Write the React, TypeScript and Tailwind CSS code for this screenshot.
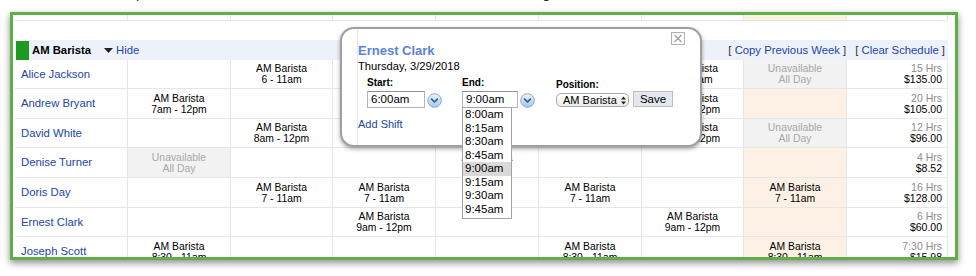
import React from 'react';

type Day = null | 'un' | string;

const DAY_W = ['w-[103px]', 'w-[102px]', 'w-[103px]', 'w-[103px]', 'w-[103px]', 'w-[102px]', 'w-[103px]'];

const rows: { name: string; h: string; days: Day[]; hrs: string; pay: string }[] = [
  { name: 'Alice Jackson', h: 'h-[29px]', days: [null, '6 - 11am', null, null, null, '6 - 11am', 'un'], hrs: '15 Hrs', pay: '$135.00' },
  { name: 'Andrew Bryant', h: 'h-[30px]', days: ['7am - 12pm', null, null, null, null, '7am - 12pm', null], hrs: '20 Hrs', pay: '$105.00' },
  { name: 'David White', h: 'h-[29px]', days: [null, '8am - 12pm', null, null, null, '8am - 12pm', 'un'], hrs: '12 Hrs', pay: '$96.00' },
  { name: 'Denise Turner', h: 'h-[30px]', days: ['un', null, null, '8 - 12pm', null, null, null], hrs: '4 Hrs', pay: '$8.52' },
  { name: 'Doris Day', h: 'h-[30px]', days: [null, '7 - 11am', '7 - 11am', null, '7 - 11am', null, '7 - 11am'], hrs: '16 Hrs', pay: '$128.00' },
  { name: 'Ernest Clark', h: 'h-[29px]', days: [null, null, '9am - 12pm', null, null, '9am - 12pm', null], hrs: '6 Hrs', pay: '$60.00' },
  { name: 'Joseph Scott', h: 'h-[30px]', days: ['8:30 - 11am', null, null, null, '8:30 - 11am', null, '8:30 - 11am'], hrs: '7:30 Hrs', pay: '$15.98' },
];

const times = ['8:00am', '8:15am', '8:30am', '8:45am', '9:00am', '9:15am', '9:30am', '9:45am'];

function DayCell({ d, i, w }: { d: Day; i: number; w: string }) {
  const bg = d === 'un' ? 'bg-[#f2f2f2]' : i === 6 ? 'bg-[#fdf1e5]' : '';
  return (
    <div className={`${w} ${bg} shrink-0 border-r border-[#e6e6e6] flex flex-col items-center justify-center text-[10.4px] leading-[11px]`}>
      {d === 'un' ? (
        <>
          <span className="text-[#a8a8a8]">Unavailable</span>
          <span className="text-[#a8a8a8]">All Day</span>
        </>
      ) : d ? (
        <>
          <span className="text-black">AM Barista</span>
          <span className="text-black">{d}</span>
        </>
      ) : null}
    </div>
  );
}

function Spin({ id }: { id: string }) {
  return (
    <svg width="15" height="15" viewBox="0 0 15 15" className="shrink-0">
      <defs>
        <linearGradient id={id} x1="0" y1="0" x2="0" y2="1">
          <stop offset="0" stopColor="#eef5fc" />
          <stop offset="1" stopColor="#a6c6e8" />
        </linearGradient>
      </defs>
      <circle cx="7.5" cy="7.5" r="6.8" fill={`url(#${id})`} stroke="#86a9cf" strokeWidth="1" />
      <path d="M4.6 6.1 L7.5 9 L10.4 6.1" fill="none" stroke="#2c5d97" strokeWidth="1.7" strokeLinecap="round" strokeLinejoin="round" />
    </svg>
  );
}

export default function App() {
  return (
    <div className="relative w-[976px] h-[276px] overflow-hidden bg-white font-['Liberation_Sans',Arial,sans-serif]">
      {/* caption line above, only its descenders show */}
      <div className="h-[12px] overflow-hidden">
        <p className="-mt-[16px] text-[15px] leading-[17px] text-[#222] whitespace-nowrap">
          <span className="ml-[124px]">Tip</span>
          <span className="ml-[368px]">Using</span>
        </p>
      </div>

      <div className="ml-[10px] w-[948px] h-[248px] overflow-hidden border-[3px] border-[#5fae48] bg-white pl-[2px] pr-[7px] shadow-[0_3px_7px_rgba(0,0,0,0.45)]">
        {/* tail of previous row */}
        <div className="flex h-[6px] border-b border-[#e6e6e6]">
          <div className="w-[113px] shrink-0 border-r border-[#e6e6e6]" />
          {DAY_W.map((w, i) => (
            <div key={i} className={`${w} shrink-0 border-r border-[#e6e6e6] overflow-hidden text-center ${i === 6 ? 'bg-[#fdf1e5]' : ''}`}>
              <div className="-mt-[9px] text-[10.4px] leading-[11px] text-black">7 - 11am</div>
            </div>
          ))}
          <div className="w-[101px] shrink-0 border-r border-[#e6e6e6]" />
        </div>

        {/* section header */}
        <div className="mt-[19px] flex items-center h-[20px] bg-[#edf2fa] text-[11.3px] pr-[3px]">
          <div className="ml-[1px] w-[13px] h-[19px] bg-[#1e9a22]" />
          <span className="ml-[3px] font-bold text-black">AM Barista</span>
          <svg width="9" height="5" viewBox="0 0 9 5" className="ml-[13px]">
            <path d="M0 0 H9 L4.5 5 Z" fill="#222" />
          </svg>
          <span className="ml-[3px] text-[#2345a7]">Hide</span>
          <div className="ml-auto flex gap-[9px]">
            <span className="text-[#333]">[ <span className="text-[#2345a7]">Copy Previous Week</span> ]</span>
            <span className="text-[#333]">[ <span className="text-[#2345a7]">Clear Schedule</span> ]</span>
          </div>
        </div>

        {rows.map((r) => (
          <div key={r.name} className={`flex ${r.h} shrink-0 border-b border-[#e6e6e6]`}>
            <div className="w-[113px] shrink-0 border-r border-[#e6e6e6] flex items-center pl-[6px] text-[11.3px] text-[#2345a7]">
              {r.name}
            </div>
            {r.days.map((d, i) => (
              <DayCell key={i} d={d} i={i} w={DAY_W[i]} />
            ))}
            <div className="w-[101px] shrink-0 border-r border-[#e6e6e6] flex flex-col items-end justify-center pr-[5px] text-[10.5px] leading-[11px]">
              <span className="text-[#8c8c8c]">{r.hrs}</span>
              <span className="text-black">{r.pay}</span>
            </div>
          </div>
        ))}
      </div>

      {/* shift editor popup */}
      <div className="absolute left-[340px] top-[27px] w-[362px] h-[120px] rounded-[14px] border-2 border-[#a0a0a0] bg-white shadow-[0_2px_4px_rgba(0,0,0,0.35)]">
        <svg width="14" height="13" viewBox="0 0 14 13" className="absolute left-[329px] top-[3px]">
          <rect x="0.5" y="0.5" width="13" height="12" fill="#fff" stroke="#b0b0b0" />
          <path d="M3.5 3 L10.5 10 M10.5 3 L3.5 10" stroke="#9a9a9a" strokeWidth="1.1" />
        </svg>
        <div className="ml-[15px] h-full border-l border-[#e8e8e8] pt-[14px]">
          <div className="text-[13px] leading-[15px] font-bold text-[#5b82d9]">Ernest Clark</div>
          <div className="mt-[1px] text-[11.2px] leading-[14px] text-black">Thursday, 3/29/2018</div>

          <div className="mt-[4px] ml-[9px] flex">
            <div className="w-[95px] flex flex-col">
              <span className="text-[10px] leading-[12px] font-bold text-black">Start:</span>
              <div className="mt-[1px] flex items-center">
                <div className="w-[58px] h-[17px] border border-[#b5b5b5] border-t-[#8f8f8f] pl-[3px] text-[11.5px] leading-[15px] text-black">6:00am</div>
                <div className="ml-[2px] mt-[3px]"><Spin id="g1" /></div>
              </div>
            </div>
            <div className="w-[94px] flex flex-col">
              <span className="text-[10px] leading-[12px] font-bold text-black">End:</span>
              <div className="mt-[1px] flex items-center">
                <div className="w-[56px] h-[17px] border border-[#b5b5b5] border-t-[#8f8f8f] pl-[3px] text-[11.5px] leading-[15px] text-black">9:00am</div>
                <div className="ml-[2px] mt-[3px]"><Spin id="g2" /></div>
              </div>
            </div>
            <div className="flex flex-col">
              <span className="pt-[2px] text-[10px] leading-[12px] font-bold text-black">Position:</span>
              <div className="flex items-end">
                <div className="w-[73px] h-[14px] rounded-[5px] border border-[#a8a8a8] bg-gradient-to-b from-white to-[#ececec] flex items-center pl-[6px] text-[11px] leading-[12px] text-black">
                  AM Barista
                  <svg width="5" height="9" viewBox="0 0 5 9" className="ml-[4px]">
                    <path d="M0 3.6 L2.5 0.4 L5 3.6 Z M0 5.4 L2.5 8.6 L5 5.4 Z" fill="#222" />
                  </svg>
                </div>
                <div className="ml-[4px] w-[40px] h-[16px] border border-[#bdbdbd] bg-[#e3e8ef] flex items-center justify-center text-[11.5px] leading-[12px] text-black">
                  Save
                </div>
              </div>
            </div>
          </div>

          <div className="mt-[10px] text-[11px] leading-[13px] text-[#2345a7]">Add Shift</div>
        </div>
      </div>

      {/* open end-time list */}
      <div className="absolute left-[462px] top-[107px] w-[50px] h-[112px] overflow-hidden border border-[#a3a3a3] bg-white">
        {times.map((t) => (
          <div key={t} className={`h-[13.5px] pl-[2px] text-[11.5px] leading-[13.5px] text-black ${t === '9:00am' ? 'bg-[#d9d9d9]' : ''}`}>
            {t}
          </div>
        ))}
      </div>
    </div>
  );
}
